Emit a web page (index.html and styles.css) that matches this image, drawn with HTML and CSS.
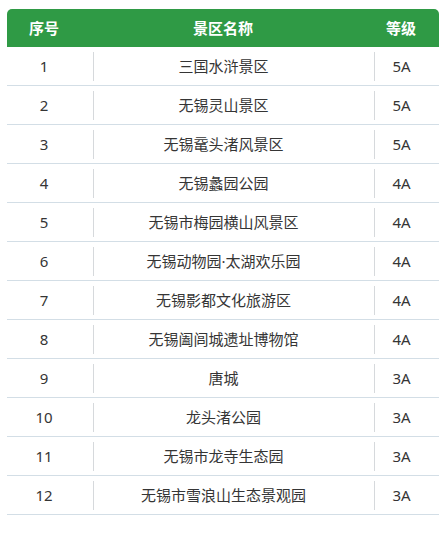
FILE: index.html
```html
<!DOCTYPE html>
<html lang="zh-CN">
<head>
<meta charset="utf-8">
<link rel="stylesheet" href="styles.css">
</head>
<body>
<div class="table">
  <div class="head">
    <div class="c1">序号</div>
    <div class="c2">景区名称</div>
    <div class="c3">等级</div>
  </div>
  <div class="row"><div class="c1">1</div><div class="c2">三国水浒景区</div><div class="c3">5A</div></div>
  <div class="row"><div class="c1">2</div><div class="c2">无锡灵山景区</div><div class="c3">5A</div></div>
  <div class="row"><div class="c1">3</div><div class="c2">无锡鼋头渚风景区</div><div class="c3">5A</div></div>
  <div class="row"><div class="c1">4</div><div class="c2">无锡蠡园公园</div><div class="c3">4A</div></div>
  <div class="row"><div class="c1">5</div><div class="c2">无锡市梅园横山风景区</div><div class="c3">4A</div></div>
  <div class="row"><div class="c1">6</div><div class="c2">无锡动物园·太湖欢乐园</div><div class="c3">4A</div></div>
  <div class="row"><div class="c1">7</div><div class="c2">无锡影都文化旅游区</div><div class="c3">4A</div></div>
  <div class="row"><div class="c1">8</div><div class="c2">无锡阖闾城遗址博物馆</div><div class="c3">4A</div></div>
  <div class="row"><div class="c1">9</div><div class="c2">唐城</div><div class="c3">3A</div></div>
  <div class="row"><div class="c1">10</div><div class="c2">龙头渚公园</div><div class="c3">3A</div></div>
  <div class="row"><div class="c1">11</div><div class="c2">无锡市龙寺生态园</div><div class="c3">3A</div></div>
  <div class="row"><div class="c1">12</div><div class="c2">无锡市雪浪山生态景观园</div><div class="c3">3A</div></div>
</div>
</body>
</html>
```

FILE: styles.css
```css
html, body {
  margin: 0;
  background: #ffffff;
}
body {
  padding: 9px 8px 0 7px;
  font-family: "Noto Sans", "Noto Sans CJK SC", sans-serif;
  font-size: 15px;
  color: #353535;
}
.table {
  width: 432px;
}
.head, .row {
  display: grid;
  grid-template-columns: 86px 281px 65px;
  text-align: center;
}
.head {
  height: 38px;
  line-height: 38px;
  background: #2f9a45;
  color: #ffffff;
  font-weight: bold;
  border-radius: 5px 5px 0 0;
}
.row {
  padding: 5px 0 4px;
  border-bottom: 1px solid #d3dee6;
}
.row > div {
  height: 29px;
  line-height: 29px;
}
.c1 { padding-right: 12px; }
.c2 { padding-right: 21px; }
.c3 { padding-right: 11px; }
.row .c2, .row .c3 {
  border-left: 1px solid #d6d9dc;
}
```
